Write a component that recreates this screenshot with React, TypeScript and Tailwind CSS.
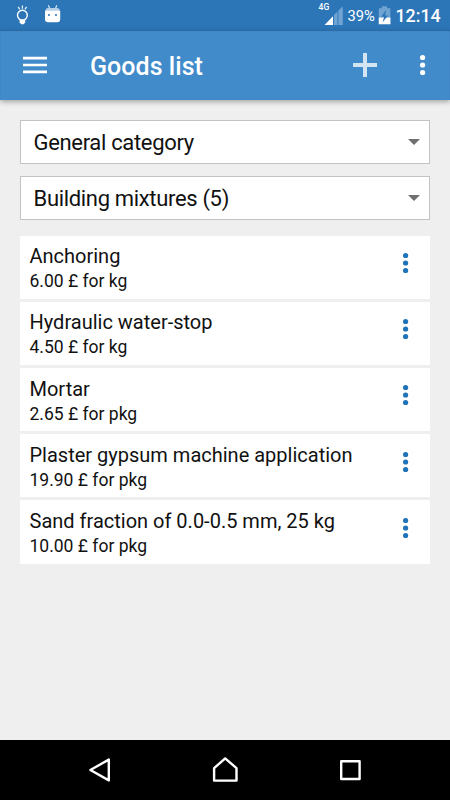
import React from 'react';

const goods = [
  { name: 'Anchoring', price: '6.00 £ for kg' },
  { name: 'Hydraulic water-stop', price: '4.50 £ for kg' },
  { name: 'Mortar', price: '2.65 £ for pkg' },
  { name: 'Plaster gypsum machine application', price: '19.90 £ for pkg' },
  { name: 'Sand fraction of 0.0-0.5 mm, 25 kg', price: '10.00 £ for pkg' },
];

const Dots: React.FC<{ className?: string }> = ({ className }) => (
  <svg width="6" height="22" viewBox="0 0 6 22" fill="currentColor" className={className}>
    <circle cx="2.6" cy="3.5" r="2.6" />
    <circle cx="2.6" cy="11" r="2.6" />
    <circle cx="2.6" cy="18.5" r="2.6" />
  </svg>
);

const StatusBar: React.FC = () => (
  <div className="flex h-[30px] items-start bg-[#2c76b8] text-white">
    <svg width="66" height="30" viewBox="0 0 66 30" fill="none">
      <circle cx="22.4" cy="15.2" r="4.9" stroke="#fff" strokeWidth="1.4" />
      <path d="M22.4 5.6v3.2M18.2 6.8l1.6 2.6M26.6 6.8L25 9.4" stroke="#e4eef7" strokeWidth="1.3" />
      <path d="M19.6 19.6h5.6v2.6l-1.5 2h-2.6l-1.5-2z" fill="#fff" />
      <path d="M48.4 5.2l1.6 4M56.8 5.2l-1.6 4" stroke="#d5e4f1" strokeWidth="1.2" />
      <path d="M45.4 11q0-3 3-3h8.4q3 0 3 3z" fill="#b5d0e7" />
      <path d="M45 10.8h15.2v8.4q0 3-3 3h-9.2q-3 0-3-3z" fill="#fff" />
      <path d="M48 14h2v2h-2zM55 14h2v2h-2z" fill="#5b96ca" />
    </svg>
    <div className="ml-auto flex h-[30px]">
      <svg width="28" height="30" viewBox="316 0 28 30" className="shrink-0">
        <text x="318.6" y="10" fill="#fff" fontFamily="Roboto" fontSize="8.5" fontWeight="500">4G</text>
        <path d="M324.5 25L333 16.2V25z" fill="#fff" />
        <path d="M334 25V15l3.5-3.6V25zM338.4 25V10.6l4.4-4.2V25z" fill="#6fa3d1" />
      </svg>
      <span className="ml-[3.5px] w-[28px] text-[14.7px] leading-[32px] whitespace-nowrap">39%</span>
      <svg width="13" height="30" viewBox="378 0 13 30" className="ml-[2.5px] shrink-0">
        <path d="M382 6.2h5v2h3.4v16h-11.6v-16h3.2z" fill="#6fa3d1" />
        <path d="M378.8 17.6h11.6v6.6h-11.6z" fill="#fff" />
        <path d="M386.2 9.8l-5 7h3l-1.6 5.5 5.4-6.8h-3z" fill="#2c76b8" />
      </svg>
      <span className="ml-[4.5px] mr-[10.5px] w-[44px] text-[17.8px] leading-[32px] font-medium whitespace-nowrap">12:14</span>
    </div>
  </div>
);

const AppBar: React.FC = () => (
  <header className="relative flex h-[70px] items-center bg-[#428bca] text-white shadow-[0_2px_5px_rgba(0,0,0,0.3),inset_0_1px_1px_#2a679f]">
    <svg width="24" height="18" viewBox="0 0 24 18" fill="currentColor" className="ml-[23px]">
      <path d="M0 .8h24v2.7H0zM0 7.8h24v2.5H0zM0 14.6h24v2.6H0z" />
    </svg>
    <h1 className="ml-[43px] pt-[3px] text-[25px] leading-none font-medium tracking-[0.05px]">Goods list</h1>
    <svg width="24" height="24" viewBox="0 0 24 24" className="ml-auto text-[#d3e4f3]" fill="currentColor">
      <path d="M10 0h4v10h10v4H14v10h-4V14H0v-4h10z" />
    </svg>
    <Dots className="ml-[43px] mr-6" />
  </header>
);

const Select: React.FC<{ label: string }> = ({ label }) => (
  <div className="flex h-[44px] items-center justify-between border border-[#c3c3c3] bg-white pr-[9px] pl-[12.5px] text-[22px] tracking-[-0.33px] text-[#111]">
    <span>{label}</span>
    <svg width="12" height="6" viewBox="0 0 12 6">
      <path d="M0 0h12L6 6z" fill="#707070" />
    </svg>
  </div>
);

const GoodsRow: React.FC<{ name: string; price: string }> = ({ name, price }) => (
  <li className="flex h-[63.2px] justify-between bg-white pr-[21px] pl-[9.5px] text-[#111]">
    <div className="pt-[7.6px]">
      <div className="text-[20px] leading-[26px]">{name}</div>
      <div className="text-[17.5px] leading-[25.4px]">{price}</div>
    </div>
    <Dots className="mt-[16.3px] text-[#1f74b9]" />
  </li>
);

const NavBar: React.FC = () => (
  <nav className="flex h-[60px] items-center justify-between bg-black px-[88px]">
    <svg width="24" height="28" viewBox="88 758 24 28" fill="none" stroke="#fff" strokeWidth="2.4" strokeLinejoin="round">
      <path d="M108.8 761.6v20.8L90.4 772z" />
    </svg>
    <svg width="28" height="28" viewBox="211 758 28 28" fill="none" stroke="#fff" strokeWidth="2.4" strokeLinejoin="round">
      <path d="M225.2 760.4l11.3 9.8v12.4h-22.4v-12.4z" />
    </svg>
    <svg width="24" height="28" viewBox="338 758 24 28" fill="none" stroke="#fff" strokeWidth="2.4" strokeLinejoin="round">
      <path d="M341.2 763.2h18.4v17.8h-18.4z" />
    </svg>
  </nav>
);

const App: React.FC = () => {
  return (
    <div className="flex h-[800px] w-[450px] flex-col overflow-hidden bg-[#efefef] font-['Roboto',sans-serif]">
      <StatusBar />
      <AppBar />
      <main className="flex-1 px-5 pt-5">
        <div className="flex flex-col gap-3">
          <Select label="General category" />
          <Select label="Building mixtures (5)" />
        </div>
        <ul className="mt-[15.7px] flex flex-col gap-[3px]">
          {goods.map((item) => (
            <GoodsRow key={item.name} name={item.name} price={item.price} />
          ))}
        </ul>
      </main>
      <NavBar />
    </div>
  );
};

export default App;
